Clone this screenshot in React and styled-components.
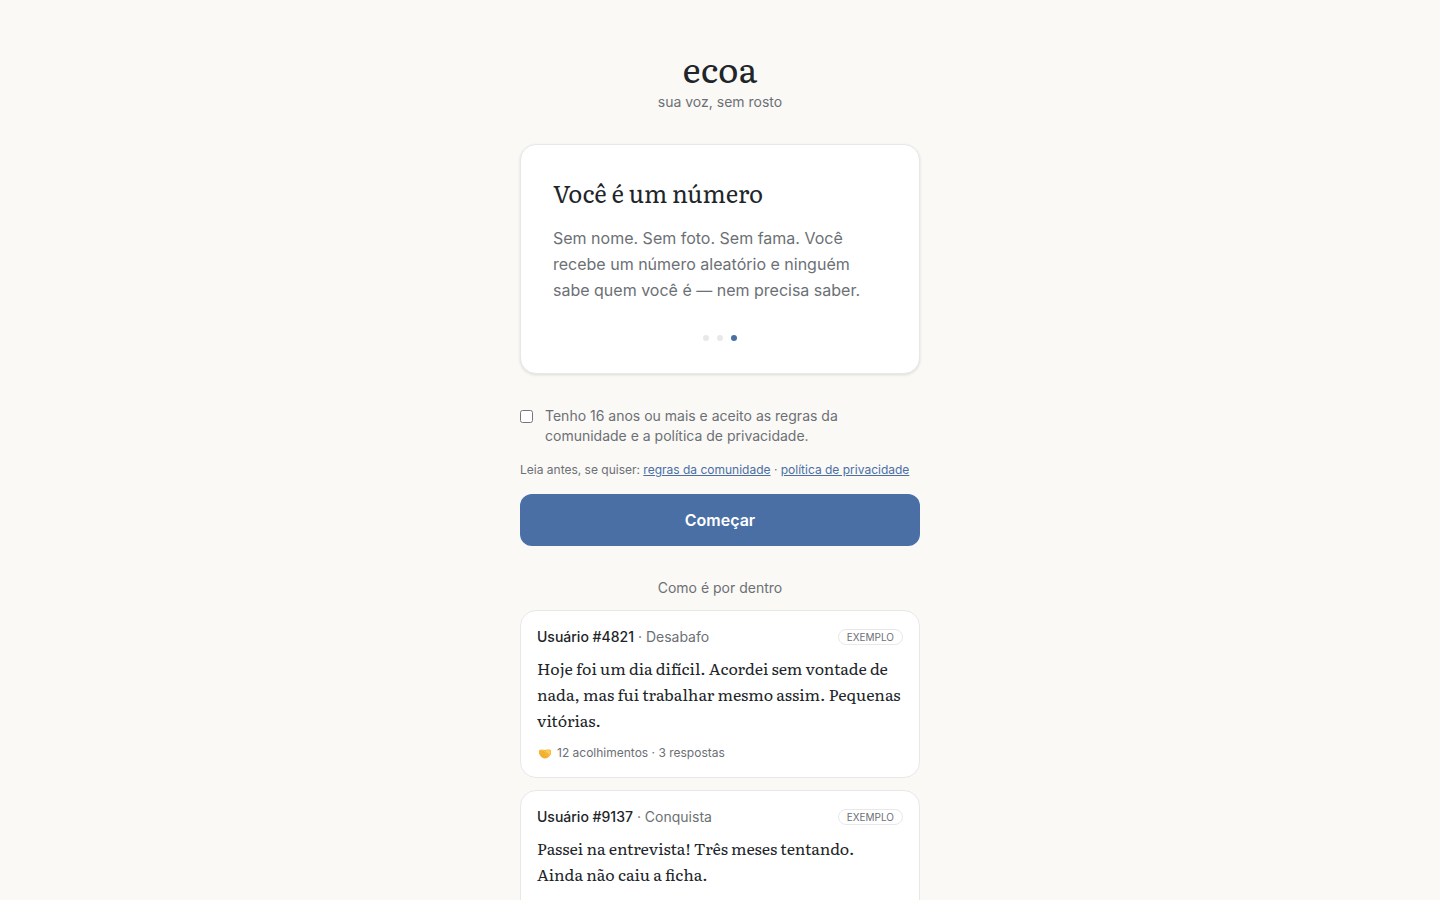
import React, { useState } from "react";
import styled, { createGlobalStyle } from "styled-components";

const color = {
  page: "#faf9f6",
  card: "#ffffff",
  ink: "#212529",
  muted: "#6c7075",
  line: "#e8e8e8",
  accent: "#4a6fa5",
};
const serif = '"Literata", "Liberation Serif", serif';

const GlobalStyle = createGlobalStyle`
  * { box-sizing: border-box; }
  body {
    margin: 0;
    background: ${color.page};
    color: ${color.ink};
    font-family: "Inter", sans-serif;
    font-size: 14px;
    line-height: 20px;
  }
  h1, h2, p { margin: 0; }
`;

const Page = styled.main`
  display: flex;
  flex-direction: column;
  width: 100%;
  max-width: 400px;
  margin: 0 auto;
  padding-top: 48px;
`;

const Header = styled.header`
  text-align: center;
  margin-bottom: 32px;
`;

const Brand = styled.h1`
  margin-bottom: 4px;
  font: 400 35px/40px ${serif};
`;

const Muted = styled.p`
  color: ${color.muted};
`;

const Slide = styled.section`
  display: flex;
  flex-direction: column;
  padding: 32px;
  background: ${color.card};
  border: 1px solid ${color.line};
  border-radius: 16px;
  box-shadow: 0 1px 3px rgba(0, 0, 0, 0.12);
`;

const SlideTitle = styled.h2`
  font: 400 24px/32px ${serif};
  margin-bottom: 16px;
`;

const SlideText = styled(Muted)`
  font-size: 16px;
  line-height: 26px;
`;

const Dots = styled.div`
  display: flex;
  justify-content: center;
  gap: 8px;
  margin-top: 32px;
`;

const Dot = styled.span`
  width: 6px;
  height: 6px;
  border-radius: 50%;
  background: ${(p) => (p.$active ? color.accent : color.line)};
`;

const Consent = styled.label`
  display: flex;
  align-items: flex-start;
  gap: 12px;
  margin-top: 32px;
  color: ${color.muted};
`;

const Checkbox = styled.input`
  flex: none;
  width: 13px;
  height: 13px;
  margin: 4px 0 0;
`;

const ReadFirst = styled(Muted)`
  margin: 16px 0;
  font-size: 12px;
  line-height: 16px;
`;

const TextLink = styled.a`
  color: ${color.accent};
  text-decoration: underline;
`;

const StartButton = styled.button`
  height: 52px;
  border: 0;
  border-radius: 12px;
  background: ${color.accent};
  color: #ffffff;
  font: 600 16px/24px "Inter", sans-serif;
  cursor: pointer;
`;

const SamplesTitle = styled(Muted)`
  margin: 32px 0 12px;
  text-align: center;
`;

const Samples = styled.div`
  display: flex;
  flex-direction: column;
  gap: 12px;
`;

const Post = styled.article`
  min-height: 168px;
  padding: 16px;
  background: ${color.card};
  border: 1px solid ${color.line};
  border-radius: 16px;
`;

const PostHeader = styled.div`
  display: flex;
  align-items: center;
  justify-content: space-between;
  margin-bottom: 8px;
  color: ${color.muted};
`;

const Author = styled.span`
  color: ${color.ink};
  font-weight: 500;
`;

const Badge = styled.span`
  padding: 0 8px;
  border: 1px solid ${color.line};
  border-radius: 8px;
  font-size: 10px;
  line-height: 14px;
  text-transform: uppercase;
`;

const PostText = styled.p`
  font: 400 16px/26px ${serif};
`;

const PostFooter = styled.div`
  display: flex;
  align-items: center;
  gap: 4px;
  margin-top: 12px;
  color: ${color.muted};
  font-size: 12px;
  line-height: 16px;
`;

function Handshake() {
  return (
    <svg width="16" height="16" viewBox="0 0 16 16" aria-hidden="true">
      <path d="M2 5.2 4.4 4.6 7.6 4.9 10.4 4.5 12.6 4.4 14 5.2 14 9 12.4 11.2 10.4 12.9 8 13.6 5.6 12.9 3.4 10.9 2 8.7Z" fill="#f5b335" />
      <path d="M2.6 5.8 4.8 5.2 7.6 5.5 6.2 7.4 8.6 7.6 12 10.4 13.4 8.6 13.4 5.7 12 5 10.2 5.1 7.8 5.7Z" fill="#fdc94f" />
      <path d="m7.8 5.4-1.7 1.9c.8.8 1.8.2 2.4-.4l3.3 3M4.1 10.2l1.3-1.1M5.6 11.7 7 10.2M7.5 12.9l1.1-1.5" fill="none" stroke="#e09a22" strokeWidth=".5" strokeLinecap="round" />
    </svg>
  );
}

const posts = [
  {
    author: "Usuário #4821",
    topic: "Desabafo",
    text: "Hoje foi um dia difícil. Acordei sem vontade de nada, mas fui trabalhar mesmo assim. Pequenas vitórias.",
    stats: "12 acolhimentos · 3 respostas",
  },
  {
    author: "Usuário #9137",
    topic: "Conquista",
    text: "Passei na entrevista! Três meses tentando. Ainda não caiu a ficha.",
  },
];

export default function App() {
  const [accepted, setAccepted] = useState(false);
  return (
    <>
      <GlobalStyle />
      <Page>
        <Header>
          <Brand>ecoa</Brand>
          <Muted>sua voz, sem rosto</Muted>
        </Header>
        <Slide>
          <SlideTitle>Você é um número</SlideTitle>
          <SlideText>
            Sem nome. Sem foto. Sem fama. Você recebe um número aleatório e
            ninguém sabe quem você é — nem precisa saber.
          </SlideText>
          <Dots>
            <Dot />
            <Dot />
            <Dot $active />
          </Dots>
        </Slide>
        <Consent htmlFor="consent">
          <Checkbox
            id="consent"
            type="checkbox"
            checked={accepted}
            onChange={(e) => setAccepted(e.target.checked)}
          />
          <span>
            Tenho 16 anos ou mais e aceito as regras da comunidade e a política
            de privacidade.
          </span>
        </Consent>
        <ReadFirst>
          Leia antes, se quiser:{" "}
          <TextLink href="#regras">regras da comunidade</TextLink> ·{" "}
          <TextLink href="#privacidade">política de privacidade</TextLink>
        </ReadFirst>
        <StartButton type="button">Começar</StartButton>
        <SamplesTitle>Como é por dentro</SamplesTitle>
        <Samples>
          {posts.map((post) => (
            <Post key={post.author}>
              <PostHeader>
                <span>
                  <Author>{post.author}</Author> · {post.topic}
                </span>
                <Badge>Exemplo</Badge>
              </PostHeader>
              <PostText>{post.text}</PostText>
              {post.stats && (
                <PostFooter>
                  <Handshake />
                  <span>{post.stats}</span>
                </PostFooter>
              )}
            </Post>
          ))}
        </Samples>
      </Page>
    </>
  );
}
